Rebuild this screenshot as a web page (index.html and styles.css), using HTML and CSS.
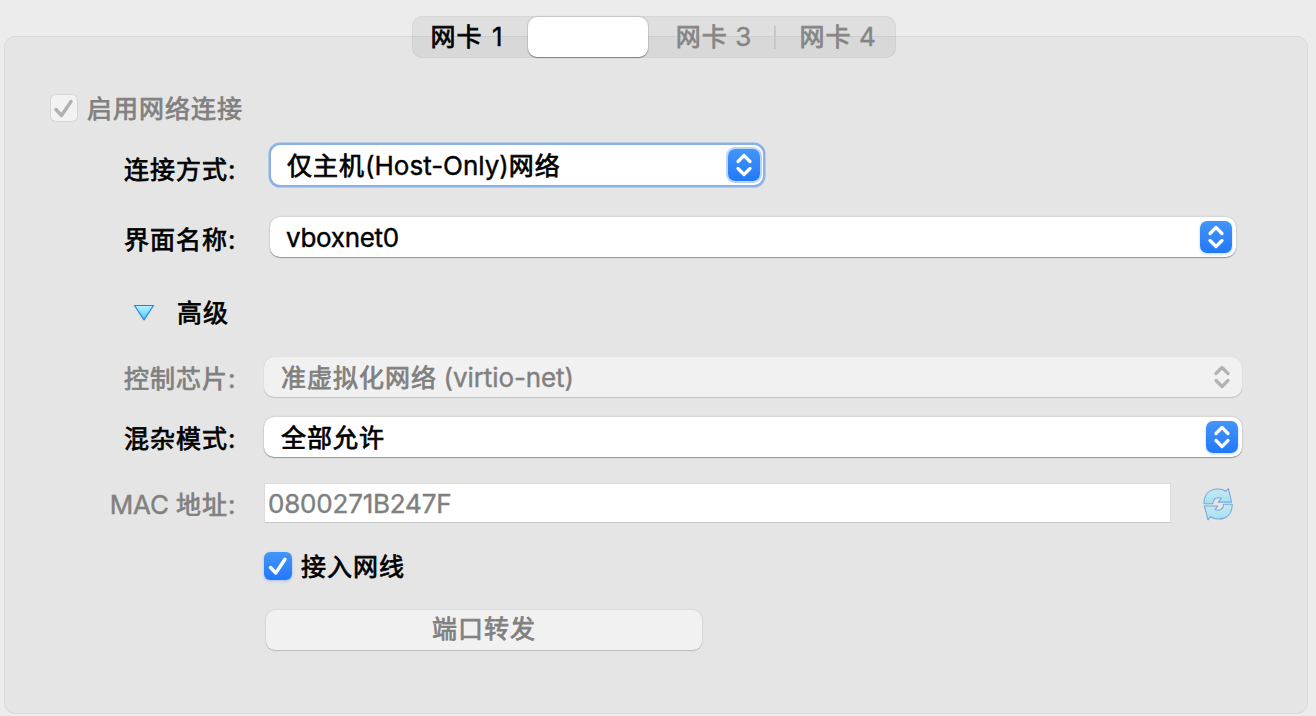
FILE: index.html
```html
<!DOCTYPE html>
<html lang="zh-CN">
<head>
<meta charset="utf-8">
<title>网络</title>
<link rel="stylesheet" href="styles.css">
</head>
<body>
<nav class="tabs">
  <div class="tab tab-first"><span>网卡 <span class="lat">1</span></span></div>
  <div class="tab tab-active"></div>
  <div class="tab tab-off tab-third"><span>网卡 <span class="lat">3</span></span></div>
  <div class="divider"></div>
  <div class="tab tab-off tab-last"><span>网卡 <span class="lat">4</span></span></div>
</nav>
<main class="panel">
  <div class="row enable off">
    <svg class="check check-off" viewBox="0 0 28 28"><path d="M6 15.5 L11.5 21.5 L21 7.5"/></svg>
    <span>启用网络连接</span>
  </div>
  <div class="row attach">
    <label class="label">连接方式<span class="lat">:</span></label>
    <div class="select focus"><span class="value">仅主机<span class="lat host">(Host-Only)</span>网络</span>
      <svg class="arrows" viewBox="0 0 32 32"><path d="M10 12.5 L16 6.5 L22 12.5 M10 19.5 L16 25.5 L22 19.5"/></svg></div>
  </div>
  <div class="row iface">
    <label class="label">界面名称<span class="lat">:</span></label>
    <div class="select"><span class="value lat vbox">vboxnet0</span>
      <svg class="arrows" viewBox="0 0 32 32"><path d="M10 12.5 L16 6.5 L22 12.5 M10 19.5 L16 25.5 L22 19.5"/></svg></div>
  </div>
  <div class="row advanced">
    <svg class="triangle" viewBox="0 0 22 18"><defs><linearGradient id="tri" x1="0" y1="0" x2="0" y2="1"><stop offset="0" stop-color="#b4f5ff"/><stop offset="1" stop-color="#4fc8ff"/></linearGradient></defs><path d="M1.5 1.5 H20.5 L11 15.8 Z" fill="url(#tri)" stroke="#2383dc" stroke-width="1.2" stroke-linejoin="round"/></svg>
    <span>高级</span>
  </div>
  <div class="row chip off">
    <label class="label">控制芯片<span class="lat">:</span></label>
    <div class="select disabled"><span class="value">准虚拟化网络 <span class="lat virtio">(virtio-net)</span></span>
      <svg class="arrows" viewBox="0 0 32 32"><path d="M10 12.5 L16 6.5 L22 12.5 M10 19.5 L16 25.5 L22 19.5"/></svg></div>
  </div>
  <div class="row mode">
    <label class="label">混杂模式<span class="lat">:</span></label>
    <div class="select"><span class="value">全部允许</span>
      <svg class="arrows" viewBox="0 0 32 32"><path d="M10 12.5 L16 6.5 L22 12.5 M10 19.5 L16 25.5 L22 19.5"/></svg></div>
  </div>
  <div class="row mac off">
    <label class="label"><span class="lat">MAC</span> 地址<span class="lat">:</span></label>
    <div class="input"><span class="lat digits">0800271B247F</span></div>
    <svg class="refresh" viewBox="0 0 32 34"><defs><linearGradient id="ref" x1="0" y1="0" x2="0" y2="1"><stop offset="0" stop-color="#c8e8f1"/><stop offset="1" stop-color="#a4e1f3"/></linearGradient></defs>
      <g stroke="#77a8dc" stroke-width="1.1" stroke-linejoin="round" fill="url(#ref)">
        <path d="M2 16.8 C2 7 7.5 2 16 2 C19 2 21.5 2.7 23.5 4.3 L26.3 1.7 L29.6 15.1 H16.2 L19.3 11.3 C14.5 9.5 10.8 12 10.7 16.8 Z"/>
        <path d="M30.2 17.2 C30.2 27 24.8 32 16.3 32 C13.2 32 10.8 31.3 8.7 29.7 L6 32.9 L2.4 19 H15.8 L13 22.6 C17.8 24.4 21.5 22 21.6 17.2 Z"/>
      </g></svg>
  </div>
  <div class="row cable">
    <svg class="check check-on" viewBox="0 0 28 28"><path d="M6.5 15.5 L11.8 21 L21 7.3"/></svg>
    <span>接入网线</span>
  </div>
  <div class="row forward off"><div class="button"><span>端口转发</span></div></div>
</main>
</body>
</html>
```
FILE: styles.css
```css
* { box-sizing: border-box; }
body {
  margin: 0;
  height: 716px;
  overflow: hidden;
  background: #ececec;
  color: #000;
  font: 25px/40px "Noto Sans CJK SC", sans-serif;
  letter-spacing: 1px;
  white-space: nowrap;
  -webkit-text-stroke: 0.75px currentColor;
}
svg { display: block; flex: none; overflow: visible; }
.lat { font-family: Inter, "Noto Sans CJK SC", sans-serif; font-size: 26px; letter-spacing: -0.2px; -webkit-text-stroke-width: 0.4px; }
.host { letter-spacing: 0; }
.vbox { letter-spacing: -0.3px; padding-top: 2px; }
.virtio { letter-spacing: -0.1px; }
.off { color: #808080; }
.tabs {
  position: relative;
  z-index: 1;
  display: flex;
  align-items: center;
  width: 484px;
  height: 42px;
  margin: 16px 0 0 412px;
  border-radius: 10px;
  background: rgba(0, 0, 0, .055);
  box-shadow: inset 0 0 2px rgba(0, 0, 0, .12);
}
.tab { display: flex; justify-content: center; height: 40px; line-height: 36px; word-spacing: 1px; }
.tab-first { width: 116px; padding-right: 7px; word-spacing: 3px; }
.tab-active { width: 120px; border-radius: 9px; background: #fff; box-shadow: 0 1px 1px rgba(0, 0, 0, .35), 0 0 2px rgba(0, 0, 0, .25); }
.tab-off { color: #858585; }
.tab-third { width: 126px; padding-left: 5px; }
.divider { width: 2px; height: 23px; background: #c7c7c7; }
.tab-last { width: 120px; padding-left: 3px; }
.panel {
  width: 1304px;
  height: 678px;
  margin: -22px 0 0 4px;
  padding-top: 50px;
  border: 1px solid #d9d9d9;
  border-radius: 11px;
  background: #e5e5e5;
}
.row { display: flex; align-items: center; height: 42px; }
.label { width: 230px; margin-right: 1px; text-align: right; flex: none; padding-top: 1px; }
.label .lat { margin-right: -0.3px; }
.enable { padding-left: 45px; gap: 9px; }
.enable span { padding-bottom: 2px; }
.check { width: 28px; height: 28px; border-radius: 6px; }
.check path { fill: none; stroke-width: 3.4; stroke-linecap: round; stroke-linejoin: round; }
.check-off { background: #f2f2f2; box-shadow: inset 0 0 0 1px #d5d5d5; }
.check-off path { stroke: #b0b0b0; }
.check-on { margin-top: 2px; background: linear-gradient(#4495f8, #2179f8); box-shadow: 0 1px 3px rgba(30, 110, 240, .3); }
.check-on path { stroke: #fff; }
.attach { margin-top: 15px; }
.attach .label { padding-top: 7px; }
.select {
  display: flex;
  align-items: center;
  justify-content: space-between;
  width: 978px;
  height: 40px;
  margin-left: 28px;
  padding: 0 4px 0 17px;
  border-radius: 10px;
  background: #fff;
  box-shadow: 0 1px 1px rgba(0, 0, 0, .3), 0 0 2px rgba(0, 0, 0, .22);
}
.arrows { width: 32px; height: 32px; border-radius: 7px; background: linear-gradient(#4495f8, #2179f8); box-shadow: 0 1px 3px rgba(30, 110, 240, .3); }
.arrows path { fill: none; stroke: #fff; stroke-width: 3.2; stroke-linecap: round; stroke-linejoin: round; }
.focus { width: 492px; margin-left: 35px; padding: 0 3px 0 16px; box-shadow: 0 0 0 2.5px #8bb2e8; border-radius: 9px; }
.focus .arrows { box-shadow: 0 0 0 2px #b9d4f8; }
.iface { margin-top: 30px; }
.iface .label { padding-top: 3px; }
.iface .select { width: 966px; margin-left: 34px; padding-left: 16px; }
.advanced { margin-top: 33px; padding-left: 128px; gap: 22px; }
.advanced span { padding-bottom: 3px; }
.triangle { width: 22px; height: 18px; margin-top: 2px; }
.chip { margin-top: 23px; }
.disabled { background: #f1f1f1; box-shadow: 0 1px 1px rgba(0, 0, 0, .14), 0 0 1px rgba(0, 0, 0, .15); }
.disabled .arrows { background: none; box-shadow: none; }
.disabled .arrows path { stroke: #b2b2b2; }
.mode { margin-top: 18px; }
.mode .value { padding-bottom: 3px; }
.mac { margin-top: 24px; }
.mac .label { word-spacing: 1px; }
.input {
  width: 907px;
  height: 40px;
  margin-left: 28px;
  padding-left: 3px;
  border: 1px solid #dcdcdc;
  border-bottom-color: #c8c8c8;
  background: #fff;
  line-height: 36px;
}
.refresh { width: 32px; height: 34px; margin: 2px 0 0 31px; }
.cable { margin-top: 20px; padding-left: 259px; gap: 9px; }
.forward { margin-top: 23px; padding-left: 261px; }
.button { width: 436px; height: 40px; border-radius: 9px; background: #f1f1f1; text-align: center; line-height: 34px; box-shadow: 0 1px 1px rgba(0, 0, 0, .15), 0 0 2px rgba(0, 0, 0, .15); }
```
